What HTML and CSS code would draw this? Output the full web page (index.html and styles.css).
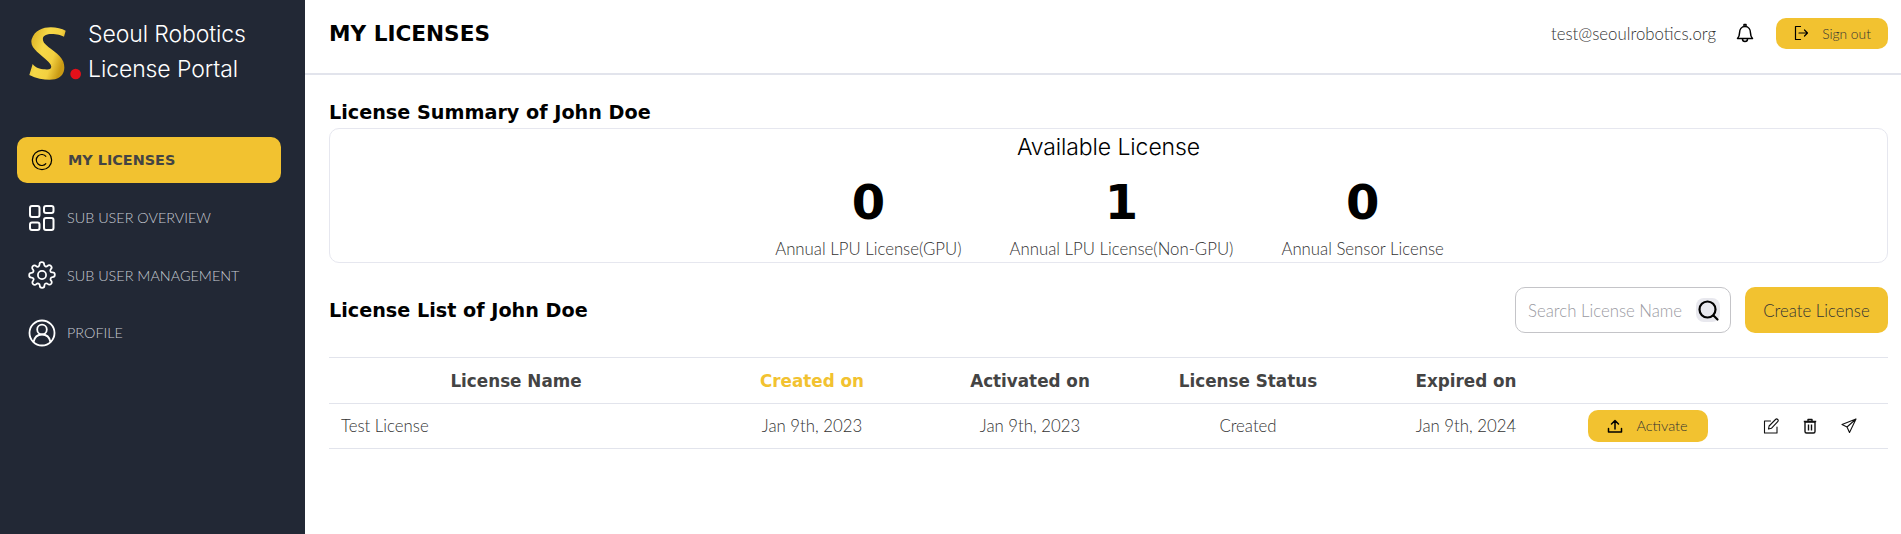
FILE: index.html
```html
<!DOCTYPE html>
<html lang="en">
<head>
<meta charset="utf-8">
<title>My Licenses</title>
<link rel="stylesheet" href="styles.css">
</head>
<body>
<div class="app">
  <aside class="sidebar">
    <div class="brand">
      <svg class="logo" viewBox="27 18 162 174" width="54" height="58" aria-hidden="true">
        <defs>
          <linearGradient id="sg" x1="0" y1="0" x2="1" y2="0.5">
            <stop offset="0" stop-color="#d6a81a"/>
            <stop offset="0.45" stop-color="#f6d848"/>
            <stop offset="0.75" stop-color="#f3d040"/>
            <stop offset="1" stop-color="#c99a14"/>
          </linearGradient>
        </defs>
        <path fill="url(#sg)" d="M137 32C110 18 50 12 35 58C28 85 60 100 85 125C100 140 95 152 75 148C60 148 45 142 38 132L28 165C55 178 85 182 105 178C130 172 138 150 130 125C120 100 85 85 72 68C62 50 75 42 95 42C110 42 125 46 132 50Z"/>
        <circle cx="167" cy="162" r="16" fill="#e3101a"/>
      </svg>
      <div class="brand-text">Seoul Robotics<br>License Portal</div>
    </div>
    <nav class="nav">
      <a class="nav-item active">
        <svg class="nav-icon" viewBox="0 0 24 24" fill="none" stroke="#000" stroke-width="1.300"><circle cx="12" cy="12" r="10.500"/><path d="M16.500 8.300A6 6 0 1 0 16.500 15.700"/></svg>
        <span>MY LICENSES</span>
      </a>
      <a class="nav-item">
        <svg class="nav-icon" viewBox="0 0 28 28" fill="none" stroke="#fff" stroke-width="2"><rect x="2" y="2" width="9.500" height="11" rx="2"/><rect x="16" y="2" width="9.500" height="7" rx="2"/><rect x="2" y="18.500" width="9.500" height="7.500" rx="2"/><rect x="16" y="14" width="9.500" height="12" rx="2"/></svg>
        <span>SUB USER OVERVIEW</span>
      </a>
      <a class="nav-item">
        <svg class="nav-icon" viewBox="0 0 24 24" fill="none" stroke="#fff" stroke-width="1.500" stroke-linecap="round" stroke-linejoin="round"><circle cx="12" cy="12" r="3.500"/><path d="M19.400 15a1.650 1.650 0 0 0 .33 1.820l.06.06a2 2 0 1 1-2.830 2.830l-.06-.06a1.650 1.650 0 0 0-2.800 1.170V21a2 2 0 1 1-4 0v-.09a1.650 1.650 0 0 0-2.880-1.120l-.06.06a2 2 0 1 1-2.830-2.830l.06-.06a1.650 1.650 0 0 0-1.170-2.800H3a2 2 0 1 1 0-4h.09a1.650 1.650 0 0 0 1.120-2.880l-.06-.06a2 2 0 1 1 2.830-2.830l.06.06a1.650 1.650 0 0 0 2.800-1.170V3a2 2 0 1 1 4 0v.09a1.650 1.650 0 0 0 2.880 1.120l.06-.06a2 2 0 1 1 2.830 2.830l-.06.06a1.650 1.650 0 0 0 1.170 2.800H21a2 2 0 1 1 0 4h-.09a1.650 1.650 0 0 0-1.510 1z"/></svg>
        <span>SUB USER MANAGEMENT</span>
      </a>
      <a class="nav-item">
        <svg class="nav-icon" viewBox="0 0 28 28" fill="none" stroke="#fff" stroke-width="1.800"><circle cx="14" cy="14" r="12.500"/><circle cx="14" cy="10.500" r="4.800"/><path d="M5.500 23c1-5 4.500-7.500 8.500-7.500s7.500 2.500 8.500 7.500"/></svg>
        <span>PROFILE</span>
      </a>
    </nav>
  </aside>
  <div class="main">
    <header class="topbar">
      <h1 class="page-title">MY LICENSES</h1>
      <div class="top-actions">
        <span class="email">test@seoulrobotics.org</span>
        <svg class="bell" viewBox="0 0 20 20" width="20" height="20" fill="none" stroke="#000" stroke-width="1.500" stroke-linejoin="round"><path d="M2.500 15.500c1.500-1.500 2-2.500 2-5.500 0-3.500 2-6.500 5.500-6.500s5.500 3 5.500 6.500c0 3 .5 4 2 5.500z"/><path d="M9 3V1.500h2V3M7.500 16a2.500 2.500 0 0 0 5 0"/></svg>
        <button class="btn signout">
          <svg viewBox="0 0 16 16" width="16" height="16" fill="none" stroke="#000" stroke-width="1.200" stroke-linecap="round" stroke-linejoin="round"><path d="M7.500 1.500H2.500v13h5"/><path d="M6 8h8.500M11.500 5l3 3-3 3"/></svg>
          <span>Sign out</span>
        </button>
      </div>
    </header>
    <main class="content">
      <h2 class="section-title summary-title">License Summary of John Doe</h2>
      <section class="summary-card">
        <div class="available">Available License</div>
        <div class="stats">
          <div class="stat"><div class="stat-num">0</div><div class="stat-label">Annual LPU License(GPU)</div></div>
          <div class="stat"><div class="stat-num">1</div><div class="stat-label">Annual LPU License(Non-GPU)</div></div>
          <div class="stat"><div class="stat-num">0</div><div class="stat-label">Annual Sensor License</div></div>
        </div>
      </section>
      <div class="list-head">
        <h2 class="section-title">License List of John Doe</h2>
        <div class="list-actions">
          <div class="search">
            <span class="placeholder">Search License Name</span>
            <span class="search-btn">
              <svg viewBox="0 0 24 24" width="24" height="24" fill="none" stroke="#000" stroke-width="2.200"><circle cx="11.500" cy="11.500" r="8"/><path d="M17.500 17.500l4 4" stroke-linecap="round"/></svg>
            </span>
          </div>
          <button class="btn create">Create License</button>
        </div>
      </div>
      <div class="table">
        <div class="row head">
          <div>License Name</div>
          <div class="sorted">Created on</div>
          <div>Activated on</div>
          <div>License Status</div>
          <div>Expired on</div>
          <div></div>
          <div></div>
        </div>
        <div class="row body">
          <div class="name-cell">Test License</div>
          <div>Jan 9th, 2023</div>
          <div>Jan 9th, 2023</div>
          <div>Created</div>
          <div>Jan 9th, 2024</div>
          <div>
            <button class="btn activate">
              <svg viewBox="0 0 16 16" width="16" height="16" fill="none" stroke="#000" stroke-width="1.500" stroke-linecap="round" stroke-linejoin="round"><path d="M8 11V2.500M4.500 6 8 2.500 11.500 6M1.500 10.500v3.500h13v-3.500"/></svg>
              <span>Activate</span>
            </button>
          </div>
          <div class="row-icons">
            <svg viewBox="0 0 16 16" width="16" height="16" fill="none" stroke="#111" stroke-width="1.100" stroke-linejoin="round" stroke-linecap="round"><path d="M7.500 3H1.500v12h12.500V9"/><path d="M5.500 11l.6-3 6.400-6.500a1.300 1.300 0 0 1 2.200 2.200L8.400 10.300z"/></svg>
            <svg viewBox="0 0 16 16" width="16" height="16" fill="none" stroke="#111" stroke-width="1.400" stroke-linejoin="round"><path d="M3 4h10v9.500a1.500 1.500 0 0 1-1.500 1.500h-7A1.500 1.500 0 0 1 3 13.500z"/><path d="M1.800 3.500h12.400M6 3.500V1.500h4v2M6.500 6.500v6M9.500 6.500v6"/></svg>
            <svg viewBox="0 0 16 16" width="16" height="16" fill="none" stroke="#111" stroke-width="1.100" stroke-linejoin="round"><path d="M15 1 1 6.500l5 2.500 2.500 5.500zM15 1 6 9"/></svg>
          </div>
        </div>
      </div>
    </main>
  </div>
</div>
</body>
</html>
```
FILE: styles.css
```css
* { box-sizing: border-box; }
html, body { margin: 0; height: 100%; }
body { font-family: "Lato", sans-serif; color: #333; background: #fff; overflow: hidden; }
.app { display: flex; height: 534px; }
.sidebar { width: 305px; flex: none; background: #222835; padding: 17px 24px 0 17px; }
.brand { display: flex; height: 80px; padding: 9px 0 0 12px; }
.logo { display: block; flex: none; margin-right: 5px; }
.brand-text { font-family: "Inter", "Open Sans", sans-serif; font-weight: 300; font-size: 23px; line-height: 35px; color: #fff; margin-top: -9px; white-space: nowrap; letter-spacing: -0.1px; }
.nav { display: flex; flex-direction: column; margin-top: 40px; gap: 11.500px; }
.nav-item { display: flex; align-items: center; height: 46px; padding-left: 11px; border-radius: 10px; color: #c6cad2; font-size: 14.400px; font-weight: 300; }
.nav-item.active { background: #f2c230; color: #444; font-family: "DejaVu Sans", sans-serif; font-weight: 700; font-size: 14.400px; }
.nav-icon { width: 28px; height: 28px; flex: none; margin-right: 11px; }
.active .nav-icon { width: 22px; height: 22px; margin: 0 15px 0 3px; }
.main { flex: 1; min-width: 0; }
.topbar { height: 75px; border-bottom: 2px solid #e2e4ec; display: flex; align-items: center; justify-content: space-between; padding: 0 13px 7px 24px; }
.page-title { margin: 0; font-family: "DejaVu Sans", sans-serif; font-size: 21.600px; font-weight: 700; color: #000; }
.top-actions { display: flex; align-items: center; }
.email { font-size: 16.800px; font-weight: 300; color: #333; margin-right: 19px; }
.bell { margin-right: 21px; }
.btn { display: flex; align-items: center; justify-content: center; border: 0; background: #f2c230; font-family: "Lato", sans-serif; font-weight: 300; color: #333; padding: 0; }
.signout { width: 112px; height: 31px; border-radius: 10px; font-size: 13.800px; gap: 13px; }
.content { padding: 0 13px 0 24px; }
.section-title { margin: 0; font-family: "DejaVu Sans", sans-serif; font-size: 19.200px; font-weight: 700; color: #000; }
.summary-title { line-height: 22px; padding-top: 27px; height: 53px; }
.summary-card { height: 135px; border: 1px solid #e6e7ef; border-radius: 10px; padding-top: 4px; text-align: center; }
.available { font-family: "Inter", "Open Sans", sans-serif; font-weight: 300; font-size: 23px; line-height: 28px; color: #000; letter-spacing: -0.1px; }
.stats { display: flex; justify-content: center; margin-top: 10px; margin-left: 2px; gap: 48px; }
.stat-num { font-family: "DejaVu Sans", sans-serif; font-weight: 700; font-size: 48px; line-height: 62px; color: #000; }
.stat-label { font-size: 16.800px; font-weight: 300; color: #333; line-height: 24px; margin-top: 4px; }
.list-head { display: flex; justify-content: space-between; align-items: center; margin-top: 24px; height: 46px; }
.list-actions { display: flex; gap: 14px; }
.search { width: 216px; height: 46px; border: 1.500px solid #c4c4c8; border-radius: 10px; display: flex; align-items: center; justify-content: space-between; padding: 0 10px 0 12px; }
.placeholder { font-size: 16.800px; font-weight: 300; color: #9a9aa2; white-space: nowrap; }
.search-btn { display: flex; align-items: center; justify-content: center; width: 24px; height: 24px; border-radius: 8px; background: #e8e8ee; }
.create { width: 143px; height: 46px; border-radius: 10px; font-size: 16.800px; }
.table { margin-top: 24px; border-top: 1px solid #e2e4ec; }
.row { display: grid; grid-template-columns: 374px 218px 218px 218px 218px 145px 168px; align-items: center; text-align: center; border-bottom: 1px solid #e2e4ec; }
.head { height: 46px; font-family: "DejaVu Sans", sans-serif; font-size: 16.800px; font-weight: 700; color: #444; }
.sorted { color: #f2c230; }
.body { height: 45px; font-size: 16.800px; font-weight: 300; color: #333; padding-bottom: 1px; }
.name-cell { text-align: left; padding-left: 12px; }
.activate { width: 120px; height: 32px; border-radius: 10px; margin: 0 auto; gap: 13px; font-size: 14.500px; }
.row-icons { display: flex; justify-content: center; gap: 23px; padding-left: 12px; }
```
